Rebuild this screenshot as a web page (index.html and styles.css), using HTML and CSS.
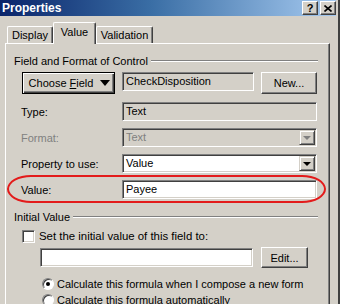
FILE: index.html
```html
<!DOCTYPE html>
<html lang="en">
<head>
  <meta charset="UTF-8">
  <title>Properties</title>
  <link rel="stylesheet" href="styles.css">
</head>
<body>

<div class="dialog">
  <div class="titlebar">
    <span class="title">Properties</span>
    <div class="title-buttons">
      <span class="cap-btn help">?</span>
      <span class="cap-btn">
        <svg width="8" height="7" viewBox="0 0 8 7"><path d="M0.5 0.5 L7.5 6.5 M7.5 0.5 L0.5 6.5" stroke="#000" stroke-width="1.6" fill="none"/></svg>
      </span>
    </div>
  </div>

  <div class="tabs">
    <div class="tab tab-display">Display</div>
    <div class="tab tab-value active">Value</div>
    <div class="tab tab-validation">Validation</div>
  </div>

  <div class="panel">
    <div class="group-title">Field and Format of Control</div>

    <div class="fields">
      <div class="choose-row">
        <button class="btn btn-choose"><span>Choose <u>F</u>ield</span><span class="tri-big"></span></button>
        <div class="box ro box-field">CheckDisposition</div>
        <button class="btn btn-new">New...</button>
      </div>

      <div class="form-grid">
        <span class="lbl">Type:</span>
        <div class="box ro">Text</div>

        <span class="lbl disabled">Format:</span>
        <div class="box ro dropdown disabled">Text<span class="drop-btn"><span class="tri"></span></span></div>

        <span class="lbl">Property to use:</span>
        <div class="box dropdown">Value<span class="drop-btn"><span class="tri"></span></span></div>

        <span class="lbl">Value:</span>
        <div class="box">Payee</div>
      </div>
    </div>

    <div class="group-title group-initial">Initial Value</div>

    <div class="check-row">
      <span class="checkbox"></span>
      <span>Set the initial value of this field to:</span>
    </div>

    <div class="formula-row">
      <div class="box box-formula"></div>
      <button class="btn btn-edit">Edit...</button>
    </div>

    <div class="radio-row first">
      <span class="radio checked"></span>
      <span>Calculate this formula when I compose a new form</span>
    </div>
    <div class="radio-row">
      <span class="radio"></span>
      <span>Calculate this formula automatically</span>
    </div>

    <!-- red annotation round the Value row -->
    <div class="highlight"></div>
  </div>
</div>

</body>
</html>
```

FILE: styles.css
```css
* {
  box-sizing: border-box;
}

html, body {
  margin: 0;
  padding: 0;
  background: #d4d0c8;
}

body {
  font-family: "Liberation Sans", Arial, sans-serif;
  font-size: 11px;
  color: #000;
}

.dialog {
  width: 340px;
  height: 304px;
  overflow: hidden;
  background: #d4d0c8;
  border-right: 2px solid #404040;
}

.titlebar {
  height: 16px;
  margin-right: 2px;
  padding-left: 2px;
  display: flex;
  align-items: center;
  justify-content: space-between;
  background: linear-gradient(to right, #0a246a, #3a6ea5 45%, #a6caf0);
}

.title {
  color: #fff;
  font-weight: bold;
  font-size: 12px;
}

.title-buttons {
  display: flex;
  gap: 2px;
}

.cap-btn {
  width: 16px;
  height: 14px;
  display: flex;
  align-items: center;
  justify-content: center;
  background: #d4d0c8;
  border: 1px solid;
  border-color: #fff #404040 #404040 #fff;
  box-shadow: inset -1px -1px #808080;
  font-weight: bold;
  font-size: 11px;
  line-height: 1;
}

.tabs {
  display: flex;
  align-items: flex-end;
  height: 21px;
  margin-top: 6px;
  padding-left: 7px;
  position: relative;
  z-index: 1;
}

.tab {
  height: 17px;
  padding-top: 2px;
  text-align: center;
  background: #d4d0c8;
  border-left: 1px solid #fff;
  border-top: 1px solid #fff;
  border-right: 1px solid #404040;
  border-radius: 2px 2px 0 0;
  box-shadow: inset -1px 0 #808080;
}

.tab-display {
  width: 46px;
}

.tab-value {
  width: 43px;
}

.tab-validation {
  width: 57px;
}

.tab.active {
  height: 22px;
  margin-bottom: -1px;
  padding-top: 3px;
}

.panel {
  position: relative;
  width: 325px;
  height: 270px;
  margin-left: 5px;
  border-left: 1px solid #fff;
  border-top: 1px solid #fff;
  border-right: 1px solid #404040;
  box-shadow: inset -1px 0 #808080;
}

.group-title {
  display: flex;
  align-items: center;
  gap: 3px;
  height: 13px;
  margin: 10px 11px 0 8px;
}

.group-title::after {
  content: "";
  flex: 1;
  border-top: 1px solid #808080;
  border-bottom: 1px solid #fff;
}

.group-initial {
  margin-top: 11px;
}

.fields {
  padding-left: 15px;
}

.choose-row {
  display: flex;
  gap: 7px;
  height: 22px;
  margin-top: 5px;
}

.btn {
  font: inherit;
  color: #000;
  padding: 0;
  background: #d4d0c8;
  border: 1px solid;
  border-color: #fff #404040 #404040 #fff;
  box-shadow: inset -1px -1px #808080;
}

.btn-choose {
  width: 93px;
  margin-left: 1px;
  border: 1px solid #000;
  box-shadow: inset 1px 1px #fff, inset -1px -1px #404040, inset -2px -2px #808080;
  display: flex;
  align-items: center;
  justify-content: center;
  gap: 7px;
  padding-left: 2px;
}

.tri-big {
  width: 0;
  height: 0;
  border-left: 5px solid transparent;
  border-right: 5px solid transparent;
  border-top: 6px solid #000;
}

.box-field {
  width: 132px;
}

.btn-new {
  width: 56px;
}

.box {
  position: relative;
  height: 19px;
  padding-left: 3px;
  line-height: 17px;
  background: #fff;
  border: 1px solid;
  border-color: #808080 #fff #fff #808080;
  box-shadow: inset 1px 1px #404040, inset -1px -1px #d4d0c8;
  white-space: nowrap;
  overflow: hidden;
}

.box.ro {
  background: #d4d0c8;
}

.box.disabled,
.lbl.disabled {
  color: #808080;
}

.drop-btn {
  position: absolute;
  top: 1px;
  right: 1px;
  width: 16px;
  height: 15px;
  display: flex;
  align-items: center;
  justify-content: center;
  background: #d4d0c8;
  border: 1px solid;
  border-color: #d4d0c8 #404040 #404040 #d4d0c8;
  box-shadow: inset 1px 1px #fff, inset -1px -1px #808080;
}

.tri {
  width: 0;
  height: 0;
  border-left: 4px solid transparent;
  border-right: 4px solid transparent;
  border-top: 4px solid #000;
}

.disabled .tri {
  border-top-color: #808080;
}

.form-grid {
  display: grid;
  grid-template-columns: 101px 195px;
  grid-auto-rows: 19px;
  row-gap: 7px;
  margin-top: 8px;
  align-items: center;
}

.check-row {
  display: flex;
  align-items: center;
  gap: 4px;
  height: 14px;
  margin-top: 6px;
  padding-left: 16px;
  font-size: 11.4px;
}

.checkbox {
  width: 13px;
  height: 13px;
  background: #fff;
  border: 1px solid;
  border-color: #808080 #fff #fff #808080;
  box-shadow: inset 1px 1px #404040, inset -1px -1px #d4d0c8;
}

.formula-row {
  display: flex;
  align-items: center;
  gap: 8px;
  height: 21px;
  margin-top: 4px;
  padding-left: 34px;
}

.box-formula {
  width: 213px;
}

.btn-edit {
  width: 47px;
  height: 21px;
}

.radio-row {
  display: flex;
  align-items: center;
  gap: 3px;
  height: 13px;
  margin-top: 3px;
  padding-left: 36px;
}

.radio-row.first {
  margin-top: 9px;
}

.radio {
  width: 12px;
  height: 12px;
  border-radius: 50%;
  background: #fff;
  border: 1px solid;
  border-color: #808080 #fff #fff #808080;
  box-shadow: inset 1px 1px #404040;
  display: flex;
  align-items: center;
  justify-content: center;
}

.radio.checked::after {
  content: "";
  width: 4px;
  height: 4px;
  border-radius: 50%;
  background: #000;
}

.highlight {
  position: absolute;
  left: 1px;
  top: 131px;
  width: 319px;
  height: 28px;
  border: 2px solid #e31b1b;
  border-radius: 24px / 14px;
  pointer-events: none;
}
```
